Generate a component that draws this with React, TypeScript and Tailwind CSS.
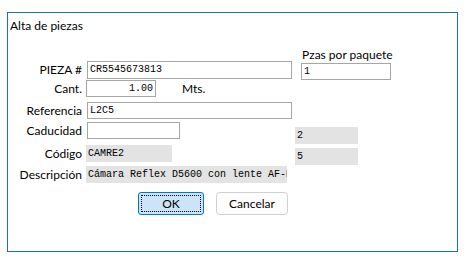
import React from "react";

const sans = { fontFamily: "Lato, 'Noto Sans', sans-serif" };
const mono = { fontFamily: "'Liberation Mono', 'DejaVu Sans Mono', monospace" };

function Label({ children }: { children: React.ReactNode }) {
  return (
    <div className="w-[74px] shrink-0 text-right text-[12px] leading-none text-black" style={sans}>
      {children}
    </div>
  );
}

function Box({
  w,
  h = 17,
  value,
  gray,
  right,
}: {
  w: number;
  h?: number;
  value: string;
  gray?: boolean;
  right?: boolean;
}) {
  return (
    <div
      className={
        "box-border flex items-center overflow-hidden whitespace-nowrap text-[10px] leading-none text-black " +
        (gray ? "bg-[#e3e3e3] pl-[2px]" : "border border-[#a6a6a6] bg-white px-[2px]") +
        (right ? " justify-end" : "")
      }
      style={{ width: w, height: h, ...mono }}
    >
      {value}
    </div>
  );
}

export default function App() {
  return (
    <div className="min-h-[259px] w-[467px] bg-white pl-[7px] pt-[12px]">
      <div className="box-border h-[240px] w-[451px] border border-[#1a6fc6]">
        <div className="h-[36px] pl-[2px] pt-[7px] text-[12px] leading-none text-black" style={sans}>
          Alta de piezas
        </div>
        <div className="flex">
          <div className="flex w-[287px] flex-col">
            <div className="mt-[12px] flex h-[18px] items-center gap-[5px]">
              <Label>PIEZA #</Label>
              <Box w={205} h={18} value="CR5545673813" />
            </div>
            <div className="mt-[1px] flex h-[17px] items-center gap-[4px]">
              <Label>Cant.</Label>
              <Box w={70} value="1.00" right />
              <span className="ml-[22px] text-[12px] leading-none text-black" style={sans}>
                Mts.
              </span>
            </div>
            <div className="mt-[5px] flex h-[17px] items-center gap-[5px]">
              <Label>Referencia</Label>
              <Box w={205} value="L2C5" />
            </div>
            <div className="mt-[3px] flex h-[17px] items-center gap-[5px]">
              <Label>Caducidad</Label>
              <Box w={93} value="" />
            </div>
            <div className="mt-[6px] flex h-[17px] items-center gap-[4px]">
              <Label>Código</Label>
              <Box w={86} value="CAMRE2" gray />
            </div>
            <div className="mt-[4px] flex h-[17px] items-center gap-[4px]">
              <Label>Descripción</Label>
              <Box w={201} value="Cámara Reflex D5600 con lente AF-P" gray />
            </div>
            <div className="ml-[130px] mt-[9px] flex gap-[12px]">
              <button
                className="box-border flex h-[23px] w-[66px] items-center justify-center rounded-[3px] border border-[#0078d7] bg-[#cce4f7] p-[2px]"
              >
                <span
                  className="flex h-full w-full items-center justify-center rounded-[1px] border border-dotted border-black text-[12px] leading-none text-black"
                  style={sans}
                >
                  OK
                </span>
              </button>
              <button
                className="box-border flex h-[23px] w-[72px] items-center justify-center rounded-[4px] border border-[#d0d0d0] bg-[#fdfdfd] text-[12px] leading-none text-black"
                style={sans}
              >
                Cancelar
              </button>
            </div>
          </div>
          <div className="flex flex-col">
            <div className="ml-[7px] h-[14px] text-[12px] leading-none text-black" style={sans}>
              Pzas por paquete
            </div>
            <div className="ml-[6px]">
              <Box w={90} value="1" />
            </div>
            <div className="mt-[47px]">
              <Box w={63} value="2" gray />
            </div>
            <div className="mt-[4px]">
              <Box w={63} value="5" gray />
            </div>
          </div>
        </div>
      </div>
    </div>
  );
}
